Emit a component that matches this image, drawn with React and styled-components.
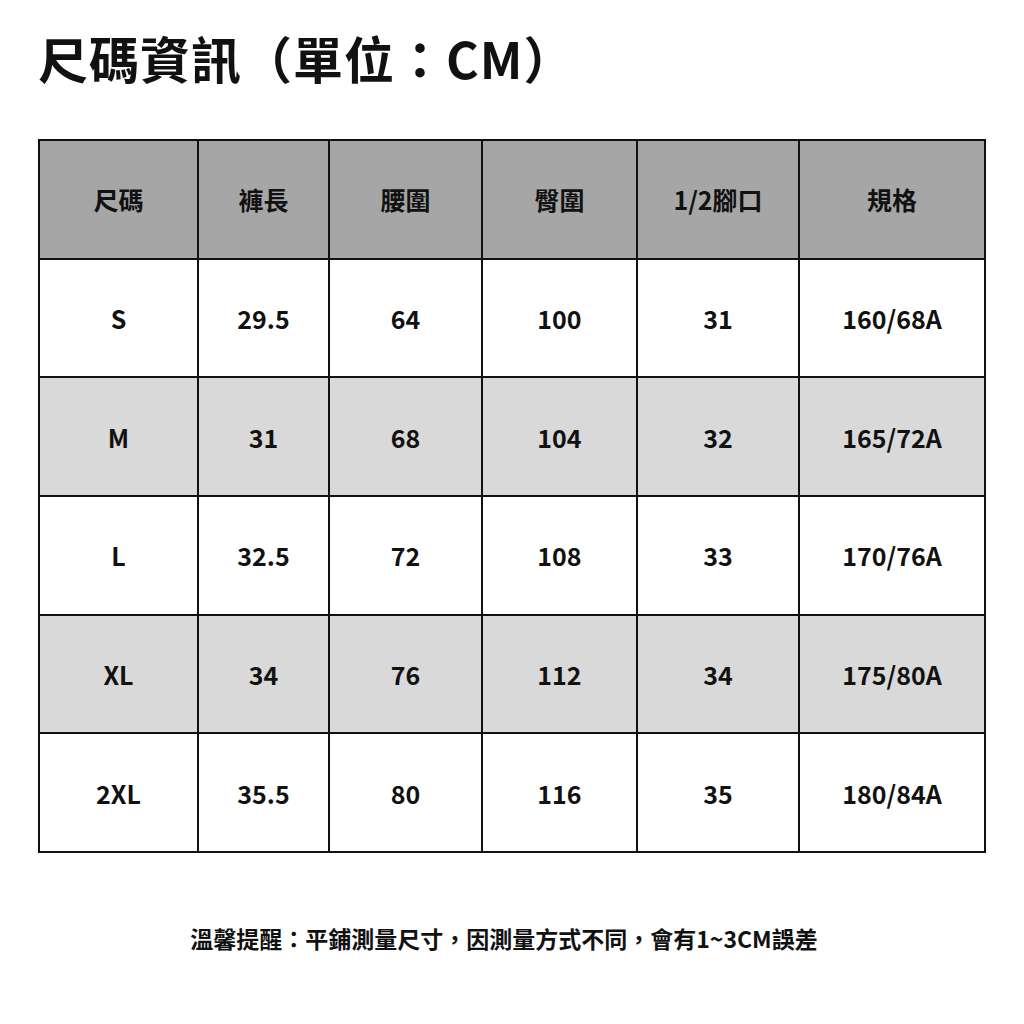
import styled, { createGlobalStyle } from 'styled-components';

const GlobalStyle = createGlobalStyle`
  html, body {
    margin: 0;
    padding: 0;
    background: #ffffff;
  }
  body {
    font-family: "Noto Sans CJK TC", "Noto Sans", sans-serif;
    color: #111111;
  }
`;

const Page = styled.div`
  width: 1024px;
  height: 1024px;
  box-sizing: border-box;
  padding: 26px 38px 0 38px;
  display: flex;
  flex-direction: column;
`;

const Title = styled.h1`
  margin: 0;
  font-size: 50px;
  line-height: 62px;
  font-weight: 700;
  letter-spacing: 1px;
`;

const Table = styled.table`
  margin-top: 51px;
  width: 946px;
  border-collapse: collapse;
  table-layout: fixed;
`;

const Row = styled.tr`
  height: 118.7px;
  background: ${p => (p.$head ? '#a6a6a6' : p.$alt ? '#d9d9d9' : '#ffffff')};
`;

const Cell = styled.td`
  border: 2px solid #111111;
  text-align: center;
  vertical-align: middle;
  font-size: 25px;
  font-weight: 700;
  padding: 0;
`;

const Note = styled.p`
  margin: 68px 0 0 0;
  text-align: center;
  font-size: 23px;
  font-weight: 700;
  padding-right: 16px;
`;

const widths = [159, 131, 153, 155, 162, 186];
const header = ['尺碼', '褲長', '腰圍', '臀圍', '1/2腳口', '規格'];
const rows = [
  ['S', '29.5', '64', '100', '31', '160/68A'],
  ['M', '31', '68', '104', '32', '165/72A'],
  ['L', '32.5', '72', '108', '33', '170/76A'],
  ['XL', '34', '76', '112', '34', '175/80A'],
  ['2XL', '35.5', '80', '116', '35', '180/84A'],
];

export default function App() {
  return (
    <>
      <GlobalStyle />
      <Page>
        <Title>尺碼資訊（單位：CM）</Title>
        <Table>
          <colgroup>
            {widths.map((w, i) => (
              <col key={i} style={{ width: w }} />
            ))}
          </colgroup>
          <tbody>
            <Row $head>
              {header.map(h => (
                <Cell key={h}>{h}</Cell>
              ))}
            </Row>
            {rows.map((r, i) => (
              <Row key={r[0]} $alt={i % 2 === 1}>
                {r.map((v, j) => (
                  <Cell key={j}>{v}</Cell>
                ))}
              </Row>
            ))}
          </tbody>
        </Table>
        <Note>溫馨提醒：平鋪測量尺寸，因測量方式不同，會有1~3CM誤差</Note>
      </Page>
    </>
  );
}
